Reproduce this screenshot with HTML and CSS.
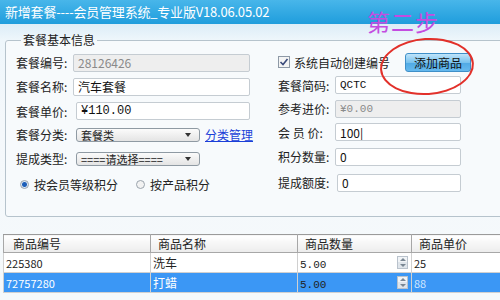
FILE: index.html
```html
<!DOCTYPE html>
<html lang="zh-CN">
<head>
    <meta charset="UTF-8">
    <title>新增套餐</title>
    <link rel="stylesheet" href="styles.css">
</head>
<body>
    <div class="window">
        <div class="titlebar">新增套餐----会员管理系统_专业版V18.06.05.02</div>
        <div class="step">第二步</div>
        <div class="content">
            <fieldset class="groupbox">
                <legend>套餐基本信息</legend>
                <div class="cols">
                    <div class="col col-left">
                        <div class="row r1"><label>套餐编号:</label><input class="txt w177" value="28126426" disabled></div>
                        <div class="row r2"><label>套餐名称:</label><input class="txt w177" value="汽车套餐"></div>
                        <div class="row r3"><label class="lw60">套餐单价:</label><input class="txt w174 money" value="¥110.00"></div>
                        <div class="row r4"><label class="lw60">套餐分类:</label><div class="select">套餐类<span class="arrow"></span></div><a class="link" href="#">分类管理</a></div>
                        <div class="row r5"><label class="lw60">提成类型:</label><div class="select">====请选择====<span class="arrow"></span></div></div>
                        <div class="row r6">
                            <span class="radio checked"></span><span class="opt">按会员等级积分</span>
                            <span class="radio second"></span><span class="opt">按产品积分</span>
                        </div>
                    </div>
                    <div class="col col-right">
                        <div class="row q1">
                            <span class="checkbox"><svg width="10" height="10" viewBox="0 0 10 10"><path d="M1.5 5 L4 7.5 L8.5 2" fill="none" stroke="#3a4a7a" stroke-width="1.6"/></svg></span>
                            <span class="opt">系统自动创建编号</span>
                            <button class="btn-add">添加商品</button>
                        </div>
                        <div class="row q2"><label>套餐简码:</label><input class="txt w126 mono" value="QCTC"></div>
                        <div class="row q3"><label>参考进价:</label><input class="txt w126 mono" value="¥0.00" disabled></div>
                        <div class="row q4"><label>会 员 价:</label><input class="txt w126" value="100|"></div>
                        <div class="row q5"><label>积分数量:</label><input class="txt w126" value="0"></div>
                        <div class="row q6"><label class="lw59">提成额度:</label><input class="txt w124" value="0"></div>
                    </div>
                </div>
            </fieldset>
            <div class="ellipse"></div>
            <table class="grid">
                <colgroup>
                    <col class="c1"><col class="c2"><col class="c3"><col class="c4">
                </colgroup>
                <thead>
                    <tr><th class="p9">商品编号</th><th>商品名称</th><th>商品数量</th><th>商品单价</th></tr>
                </thead>
                <tbody>
                    <tr>
                        <td>225380</td><td>洗车</td>
                        <td class="qty"><span>5.00</span><span class="spin"></span></td>
                        <td>25</td>
                    </tr>
                    <tr class="selected">
                        <td>72757280</td><td>打蜡</td>
                        <td class="qty"><span>5.00</span><span class="spin"></span></td>
                        <td class="price">88</td>
                    </tr>
                </tbody>
            </table>
        </div>
    </div>
</body>
</html>
```

FILE: styles.css
```css
/* window frame */
body {
    margin: 0;
    width: 500px;
    height: 300px;
    overflow: hidden;
    font-family: "Noto Sans CJK SC", "Liberation Sans", sans-serif;
    font-size: 12px;
    color: #222;
}
.window {
    position: relative;
    width: 500px;
    height: 300px;
    background: linear-gradient(#dcedf7 24px, #eef6fb 40px, #f4f8fb 120px, #f5f9fb);
}
.titlebar {
    height: 24px;
    line-height: 24px;
    padding-left: 5px;
    color: #fff;
    font-size: 13px;
    background: linear-gradient(#48b6ea, #1f9ddc);
    letter-spacing: -0.2px;
}
.step {
    position: absolute;
    left: 367px;
    top: 7px;
    color: #c44ce0;
    font-size: 23px;
    letter-spacing: 1px;
    line-height: 28px;
}
.content {
    padding: 9px 0 0 5px;
}

/* group box */
.groupbox {
    margin: 0;
    padding: 0 0 0 10px;
    width: 520px;
    height: 184px;
    box-sizing: border-box;
    border: 1px solid #b6c3cc;
    border-radius: 3px;
    background: #f7fafc;
}
.groupbox legend {
    padding: 0 2px;
    margin-left: 5px;
    line-height: 14px;
    font-size: 12px;
    color: #222;
}
.cols {
    display: flex;
    margin-top: 4px;
}
.col {
    display: flex;
    flex-direction: column;
}
.col-left {
    width: 262px;
}
.col-right {
    width: 200px;
}
.row {
    display: flex;
    align-items: center;
}
.r1 { height: 23px; }
.r2 { height: 25px; }
.r3 { height: 24px; }
.r4 { height: 23px; }
.r5 { height: 25px; }
.r6 { height: 26px; padding-left: 4px; }
.q1 { height: 22px; }
.q2 { height: 24px; }
.q3 { height: 23px; }
.q4 { height: 24px; }
.q5 { height: 25px; }
.q6 { height: 27px; }
label {
    width: 57px;
    flex: none;
    white-space: nowrap;
}
.lw60 { width: 60px; }
.lw59 { width: 59px; }
.txt {
    box-sizing: border-box;
    height: 18px;
    padding: 0 4px;
    border: 1px solid #c5ccd2;
    border-radius: 2px;
    background: #fff;
    font-family: "Noto Sans CJK SC", "Liberation Sans", sans-serif;
    font-size: 12px;
    color: #111;
}
.txt:disabled {
    background: #eeeeee;
    color: #8a8a8a;
}
.w177 { width: 177px; }
.w174 { width: 174px; }
.w126 { width: 126px; }
.w124 { width: 124px; }
.mono { font-family: "Liberation Mono", monospace; font-size: 11px; }
.money { font-family: "Liberation Mono", monospace; font-size: 12px; }
.select {
    position: relative;
    box-sizing: border-box;
    width: 124px;
    height: 14px;
    line-height: 12px;
    padding-left: 4px;
    border: 1px solid #8f9aa3;
    border-radius: 3px;
    background: linear-gradient(#fbfbfb, #e4e4e4);
    font-size: 11px;
}
.arrow {
    position: absolute;
    right: 8px;
    top: 4px;
    border-left: 3px solid transparent;
    border-right: 3px solid transparent;
    border-top: 4px solid #333;
}
.link {
    margin-left: 5px;
    color: #1a3fd8;
    text-decoration: underline;
}
.radio {
    width: 9px;
    height: 9px;
    box-sizing: border-box;
    border: 1px solid #9aa4ad;
    border-radius: 50%;
    background: #f2f2f2;
    margin-right: 5px;
}
.radio.checked {
    background: radial-gradient(circle, #1e5fb8 2px, #dde8f5 3px);
}
.radio.second {
    margin-left: 18px;
}
.checkbox {
    display: flex;
    align-items: center;
    justify-content: center;
    width: 12px;
    height: 12px;
    box-sizing: border-box;
    border: 1px solid #8e99a6;
    background: #f4f4f4;
    margin-right: 4px;
}
.btn-add {
    margin-left: 15px;
    width: 66px;
    height: 19px;
    padding: 0;
    border: 1px solid #3f8fc8;
    border-radius: 3px;
    background: linear-gradient(#bfe4fa, #79c2ee 50%, #4fa9e4 51%, #66b9ee);
    font-family: "Noto Sans CJK SC", sans-serif;
    font-size: 12px;
    color: #111;
}

/* red marker */
.ellipse {
    position: absolute;
    left: 380px;
    top: 38px;
    width: 90px;
    height: 53px;
    border: 2px solid #e2302a;
    border-radius: 50%;
    transform: rotate(-4deg);
}

/* product grid */
.grid {
    margin: 17px 0 0 -2px;
    width: 520px;
    border-collapse: collapse;
    table-layout: fixed;
    background: #fff;
    font-size: 11px;
}
.c1 { width: 147px; }
.c2 { width: 147px; }
.c3 { width: 114px; }
.grid th {
    height: 17px;
    padding: 0 0 0 7px;
    text-align: left;
    font-weight: normal;
    font-size: 12px;
    border: 1px solid #a7a7a7;
    border-top-color: #9a9a9a;
    background: linear-gradient(#ffffff, #ececec);
}
.grid th.p9 { padding-left: 9px; }
.grid td {
    height: 19px;
    padding: 0 0 0 2px;
    border: 1px solid #d0d0d0;
    border-top: 0;
    white-space: nowrap;
}
.grid td:nth-child(2) { font-size: 12px; }
.grid .qty {
    padding: 0;
}
.qty {
    position: relative;
}
.qty span:first-child {
    padding-left: 2px;
    font-family: "Liberation Mono", monospace;
}
.spin {
    position: absolute;
    right: 3px;
    top: 3px;
    width: 11px;
    height: 13px;
    box-sizing: border-box;
    border: 1px solid #b9c2cc;
    background: linear-gradient(#f1f4f7 50%, #dfe5eb 50%);
}
.spin::before, .spin::after {
    content: "";
    position: absolute;
    left: 2px;
    border-left: 3px solid transparent;
    border-right: 3px solid transparent;
}
.spin::before {
    top: 1px;
    border-bottom: 3px solid #7a8794;
}
.spin::after {
    bottom: 1px;
    border-top: 3px solid #7a8794;
}
.selected td {
    background: #3b97f5;
    color: #fff;
}
.selected .qty {
    color: #222;
}
.selected .price {
    color: #cfe6ff;
}
```
